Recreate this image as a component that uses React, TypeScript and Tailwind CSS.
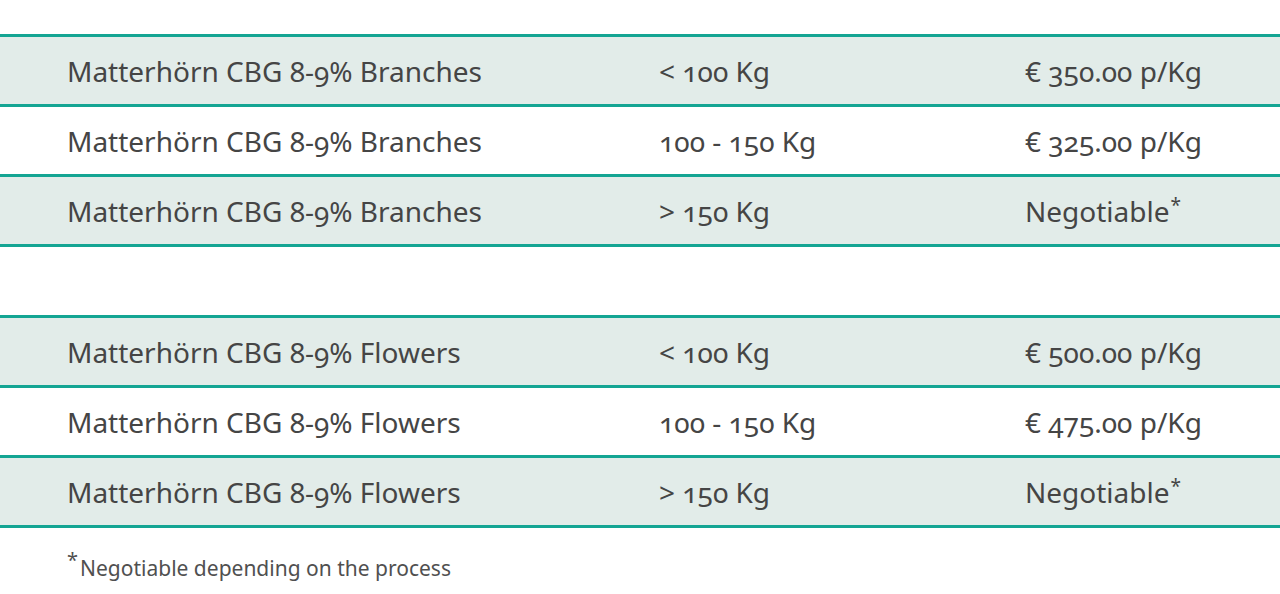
const BRANCHES = [
  { name: 'Matterhörn CBG 8-9% Branches', qty: '< 100 Kg', price: '€ 350.00 p/Kg' },
  { name: 'Matterhörn CBG 8-9% Branches', qty: '100 - 150 Kg', price: '€ 325.00 p/Kg' },
  { name: 'Matterhörn CBG 8-9% Branches', qty: '> 150 Kg', price: 'Negotiable', star: true },
];

const FLOWERS = [
  { name: 'Matterhörn CBG 8-9% Flowers', qty: '< 100 Kg', price: '€ 500.00 p/Kg' },
  { name: 'Matterhörn CBG 8-9% Flowers', qty: '100 - 150 Kg', price: '€ 475.00 p/Kg' },
  { name: 'Matterhörn CBG 8-9% Flowers', qty: '> 150 Kg', price: 'Negotiable', star: true },
];

type Row = { name: string; qty: string; price: string; star?: boolean };

function PriceTable({ rows }: { rows: Row[] }) {
  return (
    <div className="border-b-[3px] border-[#14a593]">
      {rows.map((r, i) => (
        <div
          key={i}
          className={`grid grid-cols-[659px_366px_1fr] items-center h-[70px] pt-[2px] border-t-[3px] border-[#14a593] ${i % 2 === 0 ? 'bg-[#e2ece9]' : 'bg-white'}`}
        >
          <div className="pl-[67px]">{r.name}</div>
          <div>{r.qty}</div>
          <div>
            {r.price}
            {r.star && <span className="relative top-[-10px] text-[19px] ml-[1px]">*</span>}
          </div>
        </div>
      ))}
    </div>
  );
}

export default function App() {
  return (
    <div
      className="w-[1280px] h-[594px] bg-white pt-[34px] text-[#454545] text-[28px] leading-[1.2] [font-variant-numeric:oldstyle-nums]"
      style={{ fontFamily: '"Noto Sans", sans-serif' }}
    >
      <PriceTable rows={BRANCHES} />
      <div className="h-[68px]" />
      <PriceTable rows={FLOWERS} />
      <div className="pl-[67px] pt-[28px] text-[21px] text-[#505050]">
        <span className="relative top-[-9px] text-[20px] mr-[2px]">*</span>Negotiable depending on the process
      </div>
    </div>
  );
}
